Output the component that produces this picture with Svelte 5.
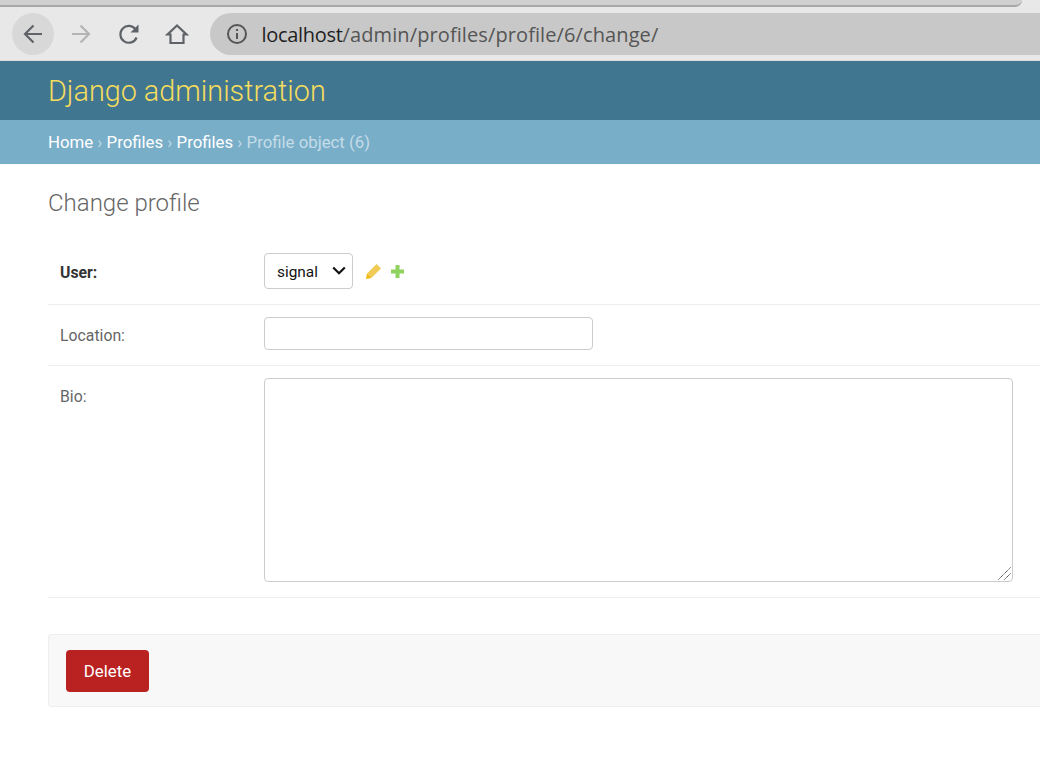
<script>
	const crumbs = ['Home', 'Profiles', 'Profiles'];
</script>

<div class="page">
	<div class="tabstrip">
		<div class="tab"></div>
	</div>
	<div class="toolbar">
		<button class="nav back" aria-label="Back">
			<svg width="24" height="24" viewBox="0 0 24 24"><path d="M21 12H4.5M12.5 3.5 4 12l8.5 8.5" fill="none" stroke="currentColor" stroke-width="2.2" /></svg>
		</button>
		<button class="nav disabled" aria-label="Forward">
			<svg width="24" height="24" viewBox="0 0 24 24"><path d="M3 12h16.5M11.5 3.5 20 12l-8.5 8.5" fill="none" stroke="currentColor" stroke-width="2.2" /></svg>
		</button>
		<button class="nav" aria-label="Reload">
			<svg width="24" height="24" viewBox="0 0 24 24"><path d="M19.6 15.5a8.4 8.4 0 1 1-.9-8" fill="none" stroke="currentColor" stroke-width="2.2" /><path d="M21.5 2.5v8h-8z" fill="currentColor" /></svg>
		</button>
		<button class="nav" aria-label="Home">
			<svg width="24" height="24" viewBox="0 0 24 24"><path d="M12 3.5 2.5 12.5H5.5V21h13v-8.5h3z" fill="none" stroke="currentColor" stroke-width="2.2" stroke-linejoin="miter" /></svg>
		</button>
		<div class="omnibox">
			<svg width="22" height="22" viewBox="0 0 22 22"><circle cx="11" cy="11" r="9" fill="none" stroke="currentColor" stroke-width="2" /><path d="M11 10v6M11 6v2" stroke="currentColor" stroke-width="2" /></svg>
			<span class="url"><b>localhost</b>/admin/profiles/profile/6/change/</span>
		</div>
	</div>

	<header class="branding">
		<h1>Django administration</h1>
	</header>
	<nav class="breadcrumbs">
		{#each crumbs as c}
			<a href="#top">{c}</a> ›{' '}
		{/each}
		Profile object (6)
	</nav>

	<main class="content">
		<h2>Change profile</h2>
		<div class="row user">
			<span class="label req">User:</span>
			<div class="select">
				<span class="value">signal</span>
				<svg width="14" height="9" viewBox="0 0 14 9"><path d="M1.2 1.5 7 7.2l5.8-5.7" fill="none" stroke="#111" stroke-width="2.2" /></svg>
			</div>
			<svg class="ico pencil" width="15" height="15" viewBox="0 0 15 15">
				<path d="M10.6 0 15 4.4 5.4 14 1 9.6z" fill="#f0cb55" />
				<path d="M1 9.6 5.4 14 0 15z" fill="#efb80b" />
			</svg>
			<svg class="ico" width="13" height="13" viewBox="0 0 13 13"><path d="M6.5 0v13M0 6.5h13" stroke="#8fd35e" stroke-width="4" /></svg>
		</div>
		<div class="row location">
			<span class="label">Location:</span>
			<div class="input"></div>
		</div>
		<div class="row bio">
			<span class="label">Bio:</span>
			<div class="textarea">
				<svg class="grip" width="13" height="13" viewBox="0 0 13 13"><path d="M.5 12.5 12.5.5M6.5 12.5l6-6" stroke="#333" stroke-width="1" stroke-dasharray="1.2 0.6" /></svg>
			</div>
		</div>
		<div class="submit">
			<button class="delete">Delete</button>
		</div>
	</main>
</div>

<style>
	:global(body) {
		margin: 0;
		background: #fff;
		overflow: hidden;
	}

	.page {
		width: 1040px;
		height: 771px;
		overflow: hidden;
		font-family: Roboto, 'Liberation Sans', sans-serif;
	}

	.tabstrip {
		height: 7px;
		background: #e8e8e8;
		overflow: hidden;
	}

	.tab {
		height: 5px;
		width: 1022px;
		background: #d0d0d0;
		border-bottom: 2px solid #a8a8a8;
		border-bottom-right-radius: 8px;
	}

	.toolbar {
		height: 54px;
		box-sizing: border-box;
		padding-top: 6px;
		padding-left: 12px;
		display: flex;
		background: #e8e8e8;
		border-bottom: 1px solid #dcdcdc;
	}

	.nav {
		width: 42px;
		height: 42px;
		margin-right: 6px;
		padding: 0;
		border: 0;
		border-radius: 50%;
		background: none;
		color: #5f6368;
		display: flex;
		align-items: center;
		justify-content: center;
	}

	.back {
		background: #d8d8d8;
	}

	.disabled {
		color: #b4b4b4;
	}

	.omnibox {
		flex: 1;
		height: 42px;
		margin-left: 6px;
		padding-left: 16px;
		display: flex;
		align-items: center;
		gap: 13.5px;
		border-radius: 21px 0 0 21px;
		background: #c8c8c8;
		color: #555;
	}

	.url {
		font-family: 'Open Sans', sans-serif;
		font-size: 20px;
		letter-spacing: 0.1px;
		color: #555;
		white-space: nowrap;
	}

	.url b {
		font-weight: 400;
		letter-spacing: -0.3px;
		color: #1f1f1f;
	}

	.branding {
		height: 59px;
		box-sizing: border-box;
		padding: 13px 48px 0;
		background: #417690;
	}

	.branding h1 {
		margin: 0;
		font-size: 28.8px;
		line-height: 34px;
		font-weight: 300;
		color: #f5dd5d;
	}

	.breadcrumbs {
		height: 44px;
		box-sizing: border-box;
		padding: 0 48px;
		line-height: 44px;
		background: #79aec8;
		color: #c4dce8;
		font-size: 16.8px;
		font-weight: 400;
	}

	.breadcrumbs a {
		color: #fff;
		text-decoration: none;
	}

	.content {
		padding: 24px 0 0 48px;
	}

	h2 {
		margin: 0 0 24px;
		height: 30px;
		font-size: 24px;
		line-height: 30px;
		font-weight: 300;
		color: #666;
	}

	.row {
		display: flex;
		align-items: flex-start;
		padding: 12px;
		border-bottom: 1px solid #eee;
	}

	.label {
		width: 204px;
		flex-shrink: 0;
		margin-top: 9px;
		font-size: 15.8px;
		line-height: 20px;
		color: #666;
	}

	.req {
		margin-top: 4px;
		font-weight: 700;
		color: #333;
	}

	.user {
		align-items: center;
		height: 63px;
		padding-top: 0;
		padding-bottom: 5px;
		box-sizing: border-box;
	}

	.select {
		width: 89px;
		height: 36px;
		box-sizing: border-box;
		padding: 0 6px 0 12px;
		display: flex;
		align-items: center;
		justify-content: space-between;
		border: 1px solid #ccc;
		border-radius: 4px;
		font-size: 15.4px;
		color: #111;
	}

	.value {
		margin-top: 2px;
	}

	.ico {
		flex-shrink: 0;
		margin-top: 2px;
	}

	.pencil {
		margin-left: 13px;
		margin-right: 10px;
	}

	.location {
		height: 61px;
		box-sizing: border-box;
	}

	.input {
		width: 329px;
		height: 33px;
		box-sizing: border-box;
		border: 1px solid #ccc;
		border-radius: 4px;
	}

	.bio {
		height: 232px;
		box-sizing: border-box;
	}

	.textarea {
		position: relative;
		width: 749px;
		height: 204px;
		box-sizing: border-box;
		border: 1px solid #ccc;
		border-radius: 4px;
	}

	.grip {
		position: absolute;
		right: 1px;
		bottom: 1px;
	}

	.submit {
		margin-top: 36px;
		height: 73px;
		box-sizing: border-box;
		padding: 15px 17px;
		background: #f8f8f8;
		border: 1px solid #eee;
		border-right: 0;
		border-radius: 4px 0 0 4px;
	}

	.delete {
		width: 83px;
		height: 42px;
		padding: 0;
		border: 0;
		border-radius: 4px;
		background: #ba2121;
		color: #fff;
		font-family: inherit;
		font-size: 16.8px;
	}
</style>
